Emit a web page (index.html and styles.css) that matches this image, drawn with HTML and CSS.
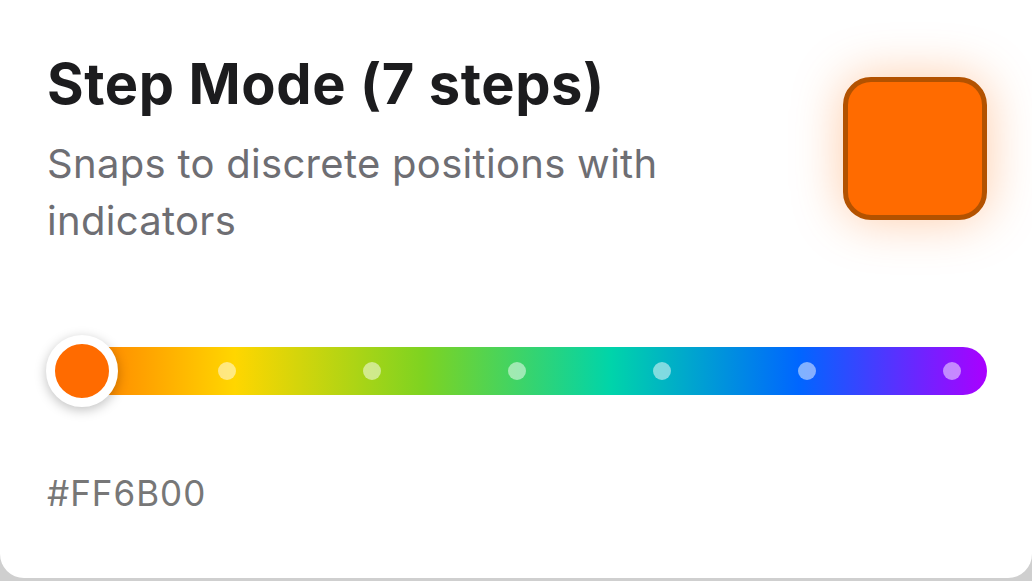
FILE: index.html
```html
<!DOCTYPE html>
<html lang="en">
<head>
<meta charset="utf-8">
<title>Step Mode</title>
<link rel="stylesheet" href="styles.css">
</head>
<body>
<div class="card">
  <div class="header">
    <div class="text">
      <h1 class="title">Step Mode (7 steps)</h1>
      <p class="subtitle">Snaps to discrete positions with indicators</p>
    </div>
    <div class="swatch"></div>
  </div>
  <div class="slider">
    <div class="track">
      <span class="dot"></span>
      <span class="dot"></span>
      <span class="dot"></span>
      <span class="dot"></span>
      <span class="dot"></span>
      <span class="dot"></span>
      <span class="dot"></span>
    </div>
    <div class="thumb"></div>
  </div>
  <div class="hex">#FF6B00</div>
</div>
</body>
</html>
```
FILE: styles.css
```css
* { box-sizing: border-box; }
html, body { margin: 0; padding: 0; }
body {
  background: #cfcfcf;
  font-family: "Inter", "Noto Sans", sans-serif;
  width: 1032px;
  height: 581px;
  overflow: hidden;
}
.card {
  background: #ffffff;
  height: 578px;
  border-radius: 0 0 24px 24px;
  padding: 0 45px 0 47px;
  display: flex;
  flex-direction: column;
}
.header {
  display: flex;
  justify-content: space-between;
  align-items: flex-start;
  padding-top: 50px;
}
.title {
  margin: 0;
  font-size: 56px;
  font-weight: 700;
  line-height: 68px;
  color: #1c1c1e;
  letter-spacing: 0.6px;
  white-space: nowrap;
}
.subtitle {
  margin: 17px 0 0;
  width: 680px;
  font-size: 40px;
  line-height: 57px;
  font-weight: 400;
  color: #6e6e73;
  letter-spacing: 0.3px;
}
.swatch {
  margin-top: 27px;
  flex-shrink: 0;
  width: 144px;
  height: 143px;
  border-radius: 28px;
  background: #ff6b00;
  border: 5px solid #b35200;
  box-shadow: 0 0 50px rgba(255, 107, 0, 0.35);
}
.slider {
  position: relative;
  margin-top: 98px;
  height: 48px;
}
.track {
  height: 48px;
  border-radius: 24px;
  background: linear-gradient(90deg, #ff6b00 0%, #ffd600 20%, #7ed321 40%, #00d4aa 60%, #0066ff 80%, #aa00ff 100%);
  display: flex;
  align-items: center;
  justify-content: space-between;
  padding: 0 26px;
}
.dot {
  width: 18px;
  height: 18px;
  border-radius: 50%;
  background: rgba(255, 255, 255, 0.5);
}
.thumb {
  position: absolute;
  left: -1px;
  top: -12px;
  width: 72px;
  height: 72px;
  border-radius: 50%;
  background: #ff6b00;
  border: 9px solid #ffffff;
  box-shadow: 0 3px 12px rgba(0, 0, 0, 0.25);
}
.hex {
  margin-top: 78px;
  font-size: 35px;
  line-height: 40px;
  color: #777777;
  letter-spacing: 1px;
}
```
